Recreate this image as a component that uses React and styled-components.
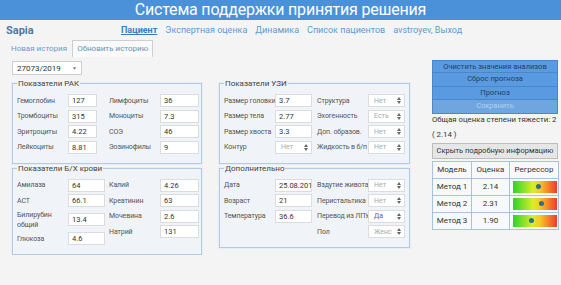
import React from 'react';
import styled, { createGlobalStyle } from 'styled-components';

const GlobalStyle = createGlobalStyle`
  body {
    margin: 0;
    background: #f4f4f4;
    font-family: Roboto, 'Noto Sans', sans-serif;
    color: #444;
  }
`;

const Header = styled.div`
  height: 20px;
  background: #4b91da;
  color: #fff;
  font-size: 16px;
  letter-spacing: -0.2px;
  line-height: 20px;
  text-align: center;
`;

const Nav = styled.div`
  display: flex;
  align-items: center;
  height: 20px;
  padding: 0 6px;
  white-space: nowrap;
`;

const Brand = styled.div`
  width: 115px;
  font-size: 11px;
  font-weight: 700;
  color: #4f7aa5;
`;

const NavLink = styled.a`
  font-size: 9px;
  margin-right: 8px;
  color: ${p => (p.$active ? '#3a7cc0' : '#5c9bd6')};
  font-weight: ${p => (p.$active ? 700 : 400)};
  text-decoration: ${p => (p.$active ? 'underline' : 'none')};
`;

const Tabs = styled.div`
  display: flex;
  height: 17px;
  padding-left: 6px;
`;

const Tab = styled.div`
  font-size: 8px;
  line-height: 16px;
  padding: 0 4px;
  color: ${p => (p.$active ? '#6f8fb0' : '#6a9cd0')};
  background: ${p => (p.$active ? '#fafafa' : 'transparent')};
  border: 1px solid ${p => (p.$active ? '#cfcfcf' : 'transparent')};
  border-bottom: none;
`;

const Main = styled.div`
  display: flex;
  padding-left: 12px;
`;

const LeftCol = styled.div`
  width: 398px;
  flex-shrink: 0;
`;

const TopSelect = styled.div`
  display: flex;
  justify-content: space-between;
  align-items: center;
  width: 70px;
  height: 14px;
  box-sizing: border-box;
  margin-top: 4px;
  padding: 0 4px;
  background: #fff;
  border: 1px solid #cfcfcf;
  font-size: 8px;
  color: #333;
  span:last-child {
    font-size: 5px;
    color: #777;
  }
`;

const Grid = styled.div`
  display: grid;
  grid-template-columns: 190px 191px;
  column-gap: 17px;
  align-items: start;
  margin-top: 4px;
`;

const Box = styled.fieldset`
  margin: 0;
  padding: 6px 4px 9px 4px;
  border: 1px solid #b5cbe3;
  background: #f0f4f8;
  box-shadow: 0 0 0 1px #e6edf5;
  min-width: 0;
`;

const Legend = styled.legend`
  font-size: 8px;
  color: #444;
  padding: 0 1px;
`;

const Cols = styled.div`
  display: flex;
  gap: ${p => p.$gap}px;
`;

const Stack = styled.div`
  display: flex;
  flex-direction: column;
  gap: 2.5px;
`;

const Row = styled.div`
  display: flex;
  align-items: center;
  min-height: 13px;
`;

const Label = styled.div`
  width: 51px;
  flex-shrink: 0;
  font-size: 7px;
  letter-spacing: -0.1px;
  line-height: 10px;
  color: #555;
  white-space: ${p => (p.$wrap ? 'normal' : 'nowrap')};
`;

const Input = styled.div`
  width: ${p => p.$w}px;
  height: 13px;
  box-sizing: border-box;
  background: #fff;
  border: 1px solid #dcdcdc;
  font-size: 7.5px;
  line-height: 11px;
  padding-left: 3px;
  color: #333;
  overflow: hidden;
  white-space: nowrap;
`;

const Select = styled.div`
  display: flex;
  justify-content: space-between;
  align-items: center;
  width: 37px;
  height: 13px;
  box-sizing: border-box;
  background: #fff;
  border: 1px solid #dcdcdc;
  font-size: 7px;
  padding: 0 3px 0 5px;
  color: ${p => (p.$dark ? '#666' : '#aaa')};
`;

const Arrows = () => (
  <svg width="4" height="7" viewBox="0 0 4 7">
    <path d="M2 0 L4 3 L0 3 Z M0 4 L4 4 L2 7 Z" fill="#666" />
  </svg>
);

const Right = styled.div`
  width: 126px;
  flex-shrink: 0;
  margin-left: 22px;
  margin-top: 3px;
  white-space: nowrap;
`;

const ActionButton = styled.div`
  height: 13.4px;
  box-sizing: border-box;
  background: ${p => (p.$disabled ? '#6fa6e0' : '#5a9ae0')};
  border: 1px solid #4a86c8;
  border-top: none;
  &:first-child {
    border-top: 1px solid #4a86c8;
  }
  color: ${p => (p.$disabled ? '#b6d0ee' : '#1d3f6a')};
  font-size: 7.5px;
  line-height: 12px;
  text-align: center;
`;

const Summary = styled.div`
  font-size: 7.8px;
  line-height: 12px;
  color: #333;
  margin-top: ${p => p.$mt || 0}px;
`;

const HideButton = styled.div`
  margin-top: 2px;
  height: 16px;
  box-sizing: border-box;
  background: #e6e6e6;
  border: 1px solid #bdbdbd;
  font-size: 7.5px;
  line-height: 14px;
  text-align: center;
  color: #333;
`;

const Table = styled.table`
  margin-top: 2px;
  width: 126px;
  table-layout: fixed;
  border-collapse: collapse;
  font-size: 8px;
  color: #333;
  td, th {
    border: 1px solid #a9c3df;
    height: 16px;
    padding: 0;
    text-align: center;
    font-weight: 400;
    background: #f7f9fb;
  }
`;

const Bar = styled.div`
  position: relative;
  margin: 0 1px 0 3px;
  height: 12px;
  background: linear-gradient(90deg, #2fd12f 0%, #d9ee2a 45%, #f7c526 62%, #ee3a2a 100%);
`;

const Dot = styled.div`
  position: absolute;
  top: 3.5px;
  width: 5px;
  height: 5px;
  margin-left: -2.5px;
  border-radius: 50%;
  background: #2b6f8f;
`;

const Field = ({ label, value, w, wrap }) => (
  <Row>
    <Label $wrap={wrap}>{label}</Label>
    <Input $w={w}>{value}</Input>
  </Row>
);

const Choice = ({ label, value, dark }) => (
  <Row>
    <Label>{label}</Label>
    <Select $dark={dark}>
      <span>{value}</span>
      <Arrows />
    </Select>
  </Row>
);

const models = [
  { name: 'Метод 1', score: '2.14', pos: 57 },
  { name: 'Метод 2', score: '2.31', pos: 65 },
  { name: 'Метод 3', score: '1.90', pos: 43 },
];

export default function App() {
  return (
    <>
      <GlobalStyle />
      <Header>Система поддержки принятия решения</Header>
      <Nav>
        <Brand>Sapia</Brand>
        <NavLink $active>Пациент</NavLink>
        <NavLink>Экспертная оценка</NavLink>
        <NavLink>Динамика</NavLink>
        <NavLink>Список пациентов</NavLink>
        <NavLink>avstroyev, Выход</NavLink>
      </Nav>
      <Tabs>
        <Tab>Новая история</Tab>
        <Tab $active>Обновить историю</Tab>
      </Tabs>
      <Main>
        <LeftCol>
          <TopSelect>
            <span>27073/2019</span>
            <span>▼</span>
          </TopSelect>
          <Grid>
            <Box>
              <Legend>Показатели РАК</Legend>
              <Cols $gap={12}>
                <Stack>
                  <Field label="Гемоглобин" value="127" w={29} />
                  <Field label="Тромбоциты" value="315" w={29} />
                  <Field label="Эритроциты" value="4.22" w={29} />
                  <Field label="Лейкоциты" value="8.81" w={29} />
                </Stack>
                <Stack>
                  <Field label="Лимфоциты" value="36" w={39} />
                  <Field label="Моноциты" value="7.3" w={39} />
                  <Field label="СОЭ" value="46" w={39} />
                  <Field label="Эозинофилы" value="9" w={39} />
                </Stack>
              </Cols>
            </Box>
            <Box>
              <Legend>Показатели УЗИ</Legend>
              <Cols $gap={5}>
                <Stack>
                  <Field label="Размер головки" value="3.7" w={37} />
                  <Field label="Размер тела" value="2.77" w={37} />
                  <Field label="Размер хвоста" value="3.3" w={37} />
                  <Choice label="Контур" value="Нет" />
                </Stack>
                <Stack>
                  <Choice label="Структура" value="Нет" />
                  <Choice label="Эхогенность" value="Есть" />
                  <Choice label="Доп. образов." value="Нет" />
                  <Choice label="Жидкость в б/п" value="Нет" />
                </Stack>
              </Cols>
            </Box>
            <Box>
              <Legend>Показатели Б/Х крови</Legend>
              <Cols $gap={4}>
                <Stack>
                  <Field label="Амилаза" value="64" w={37} />
                  <Field label="АСТ" value="66.1" w={37} />
                  <Field label="Билирубин общий" value="13.4" w={37} wrap />
                  <Field label="Глюкоза" value="4.6" w={37} />
                </Stack>
                <Stack>
                  <Field label="Калий" value="4.26" w={39} />
                  <Field label="Креатинин" value="63" w={39} />
                  <Field label="Мочевина" value="2.6" w={39} />
                  <Field label="Натрий" value="131" w={39} />
                </Stack>
              </Cols>
            </Box>
            <Box>
              <Legend>Дополнительно</Legend>
              <Cols $gap={5}>
                <Stack>
                  <Field label="Дата" value="25.08.2019" w={37} />
                  <Field label="Возраст" value="21" w={37} />
                  <Field label="Температура" value="36.6" w={37} />
                </Stack>
                <Stack>
                  <Choice label="Вздутие живота" value="Нет" />
                  <Choice label="Перистальтика" value="Нет" />
                  <Choice label="Перевод из ЛПУ" value="Да" dark />
                  <Choice label="Пол" value="Женс" />
                </Stack>
              </Cols>
            </Box>
          </Grid>
        </LeftCol>
        <Right>
          <div>
            <ActionButton>Очистить значения анализов</ActionButton>
            <ActionButton>Сброс прогноза</ActionButton>
            <ActionButton>Прогноз</ActionButton>
            <ActionButton $disabled>Сохранить</ActionButton>
          </div>
          <Summary>Общая оценка степени тяжести: 2</Summary>
          <Summary $mt={3}>( 2.14 )</Summary>
          <HideButton>Скрыть подробную информацию</HideButton>
          <Table>
            <colgroup>
              <col width="39" />
              <col width="38" />
              <col width="49" />
            </colgroup>
            <thead>
              <tr>
                <th>Модель</th>
                <th>Оценка</th>
                <th>Регрессор</th>
              </tr>
            </thead>
            <tbody>
              {models.map(m => (
                <tr key={m.name}>
                  <td>{m.name}</td>
                  <td>{m.score}</td>
                  <td>
                    <Bar>
                      <Dot style={{ left: `${m.pos}%` }} />
                    </Bar>
                  </td>
                </tr>
              ))}
            </tbody>
          </Table>
        </Right>
      </Main>
    </>
  );
}
